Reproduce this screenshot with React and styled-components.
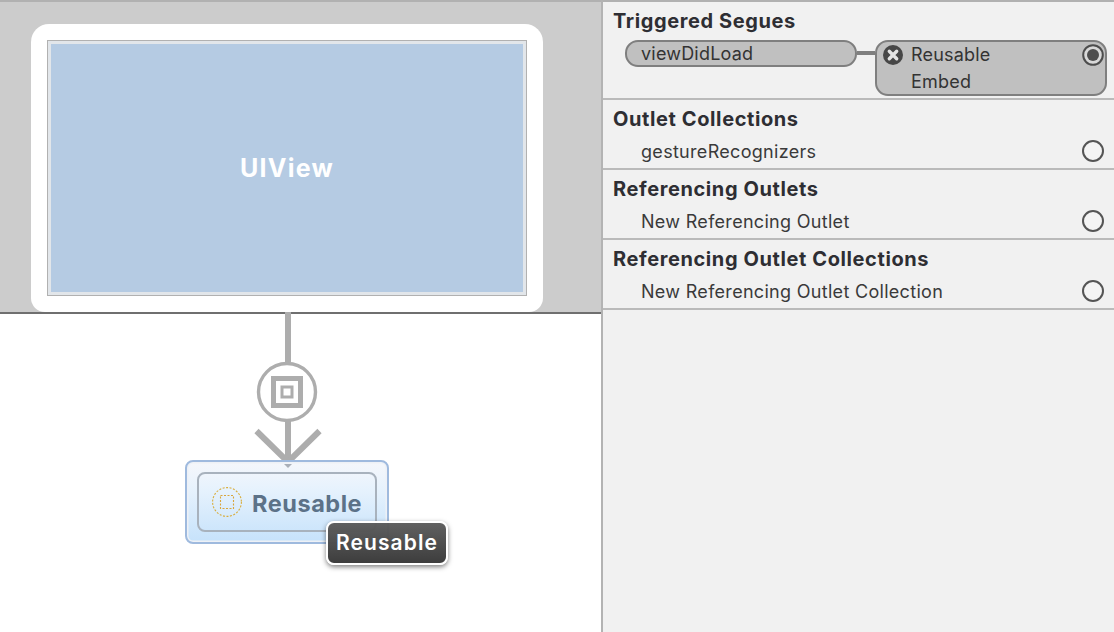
import React from 'react'
import styled, { createGlobalStyle } from 'styled-components'

const GlobalStyle = createGlobalStyle`
  html, body { margin: 0; padding: 0; background: #fff; }
  body { font-family: "Inter", "Liberation Sans", sans-serif; }
`

const Page = styled.div`
  display: grid;
  grid-template-columns: 601px 2px 511px;
  width: 1114px;
  height: 632px;
  overflow: hidden;
`

const Canvas = styled.div`
  display: flex;
  flex-direction: column;
`

const Scene = styled.div`
  height: 314px;
  padding: 22px 58px 0 31px;
  box-sizing: border-box;
  background: #cccccc;
  border-top: 2px solid #b1b1b1;
  border-bottom: 2px solid #6f6f6f;
`

const Device = styled.div`
  height: 288px;
  padding: 16px;
  box-sizing: border-box;
  background: #fff;
  border-radius: 18px 18px 14px 14px;
`

const ViewFrame = styled.div`
  display: flex;
  align-items: center;
  justify-content: center;
  height: 256px;
  box-sizing: border-box;
  background: #b5cbe3;
  border: 1px solid #b1b1b1;
  box-shadow: inset 0 0 0 3px #e2e6ea;
  color: #fff;
  font-size: 25px;
  font-weight: 700;
  letter-spacing: 1.2px;
`

const Graph = styled.div`
  position: relative;
  flex: 1;
`

const Connector = styled.svg`
  position: absolute;
  left: 250px;
  top: -2px;
  display: block;
`

const Container = styled.div`
  position: absolute;
  left: 185px;
  top: 146px;
  width: 204px;
  height: 84px;
  padding: 10px;
  box-sizing: border-box;
  border: 2px solid #9fbade;
  border-radius: 8px;
  box-shadow: inset 0 0 0 1.5px #eef1f6;
  background: linear-gradient(#f5f7fb, #e6f2fd 35%, #c6e2fb);
`

const Notch = styled.div`
  position: absolute;
  left: 97px;
  top: 2px;
  border-left: 4px solid transparent;
  border-right: 4px solid transparent;
  border-top: 4px solid #a9afb8;
`

const Inner = styled.div`
  display: flex;
  align-items: center;
  gap: 10px;
  height: 60px;
  padding-left: 13px;
  box-sizing: border-box;
  border: 2px solid #a8b2bd;
  border-radius: 8px;
`

const InnerLabel = styled.span`
  margin-top: 2px;
  color: #5c7288;
  font-size: 23.5px;
  font-weight: 700;
  letter-spacing: 0.55px;
`

const Tooltip = styled.div`
  position: absolute;
  left: 326px;
  top: 207px;
  width: 122px;
  height: 44px;
  padding-bottom: 2px;
  display: flex;
  align-items: center;
  justify-content: center;
  box-sizing: border-box;
  border: 2px solid #fff;
  border-radius: 8px;
  background: linear-gradient(rgba(90, 90, 90, 0.96), #3d3d3d);
  box-shadow: 0 2px 5px rgba(0, 0, 0, 0.5);
  color: #fff;
  font-size: 21px;
  font-weight: 600;
  letter-spacing: 1.1px;
`

const Divider = styled.div`
  background: #b3b3b3;
`

const Inspector = styled.div`
  background: #f1f1f1;
  border-top: 2px solid #b1b1b1;
`

const Section = styled.section`
  height: ${(p) => p.$height}px;
  padding: 8px 7px 0 10px;
  box-sizing: border-box;
  border-bottom: 2px solid #bababa;
`

const Heading = styled.h2`
  margin: 0;
  height: 22px;
  color: #2e2e33;
  font-size: 20px;
  line-height: 22px;
  font-weight: 700;
  letter-spacing: 0.6px;
`

const Row = styled.div`
  display: flex;
  align-items: center;
  justify-content: space-between;
  height: 28px;
  margin-top: 7px;
  padding: 0 3px 0 28px;
  color: #3a3a3a;
  font-size: 18px;
  letter-spacing: 0.3px;
`

const Ring = styled.span`
  width: 18px;
  height: 18px;
  border: 2px solid #555;
  border-radius: 50%;
  background: #f4f4f4;
`

const SegueRow = styled.div`
  display: flex;
  align-items: flex-start;
  margin: 8px 0 0 12px;
`

const EventPill = styled.div`
  width: 232px;
  height: 27px;
  padding-left: 14px;
  box-sizing: border-box;
  background: #c0c0c0;
  border: 2px solid #7f7f7f;
  border-radius: 13px;
  color: #333;
  font-size: 18px;
  line-height: 23px;
  letter-spacing: 0.2px;
`

const Link = styled.div`
  width: 18px;
  height: 4px;
  margin-top: 11px;
  background: #7f7f7f;
`

const SegueBox = styled.div`
  display: grid;
  grid-template-columns: 34px 1fr 23px;
  grid-template-rows: 25px 28px;
  align-items: center;
  width: 232px;
  height: 56px;
  box-sizing: border-box;
  background: #c0c0c0;
  border: 2px solid #7f7f7f;
  border-radius: 13px;
  color: #333;
  font-size: 18px;
  letter-spacing: 0.2px;
`

const SegueName = styled.span`
  grid-column: 2;
`

const RemoveIcon = () => (
  <svg width="20" height="20" viewBox="0 0 20 20" style={{ marginLeft: 6 }}>
    <circle cx="10" cy="10" r="10" fill="#474747" />
    <path d="M6.3 6.3l7.4 7.4M13.7 6.3l-7.4 7.4" stroke="#e4e4e4" strokeWidth="3.4" strokeLinecap="round" />
  </svg>
)

const ConnectedIcon = () => (
  <svg width="22" height="22" viewBox="0 0 22 22">
    <circle cx="11" cy="11" r="9.8" fill="#d8d8d8" stroke="#4d4d4d" strokeWidth="2" />
    <circle cx="11" cy="11" r="6" fill="#4d4d4d" />
  </svg>
)

const ReusableIcon = () => (
  <svg width="30" height="30" viewBox="0 0 30 30">
    <circle cx="15" cy="15" r="14.4" fill="none" stroke="#d9ad3c" strokeWidth="1.1" strokeDasharray="2 1.5" />
    <rect x="8.5" y="8.5" width="13" height="13" fill="none" stroke="#d9a63c" strokeWidth="1.1" strokeDasharray="2 1.5" />
  </svg>
)

const outlets = [
  { title: 'Outlet Collections', label: 'gestureRecognizers' },
  { title: 'Referencing Outlets', label: 'New Referencing Outlet' },
  { title: 'Referencing Outlet Collections', label: 'New Referencing Outlet Collection' },
]

export default function App() {
  return (
    <Page>
      <GlobalStyle />
      <Canvas>
        <Scene>
          <Device>
            <ViewFrame>UIView</ViewFrame>
          </Device>
        </Scene>
        <Graph>
          <Connector width="76" height="152" viewBox="0 0 76 152">
            <path d="M38 0v50M38 108v44" stroke="#adadad" strokeWidth="6" fill="none" />
            <circle cx="37" cy="80" r="28.5" fill="#fff" stroke="#adadad" strokeWidth="3.4" />
            <rect x="23.5" y="66.5" width="27" height="27" fill="none" stroke="#adadad" strokeWidth="5" />
            <rect x="32" y="75" width="10" height="10" fill="none" stroke="#adadad" strokeWidth="3" />
            <path d="M6.5 119l31.5 31 31.5-31" stroke="#adadad" strokeWidth="6" fill="none" />
          </Connector>
          <Container>
            <Notch />
            <Inner>
              <ReusableIcon />
              <InnerLabel>Reusable</InnerLabel>
            </Inner>
          </Container>
          <Tooltip>Reusable</Tooltip>
        </Graph>
      </Canvas>
      <Divider />
      <Inspector>
        <Section $height={98}>
          <Heading>Triggered Segues</Heading>
          <SegueRow>
            <EventPill>viewDidLoad</EventPill>
            <Link />
            <SegueBox>
              <RemoveIcon />
              <SegueName>Reusable</SegueName>
              <ConnectedIcon />
              <SegueName>Embed</SegueName>
            </SegueBox>
          </SegueRow>
        </Section>
        {outlets.map((o) => (
          <Section key={o.title} $height={70}>
            <Heading>{o.title}</Heading>
            <Row>
              {o.label}
              <Ring />
            </Row>
          </Section>
        ))}
      </Inspector>
    </Page>
  )
}
